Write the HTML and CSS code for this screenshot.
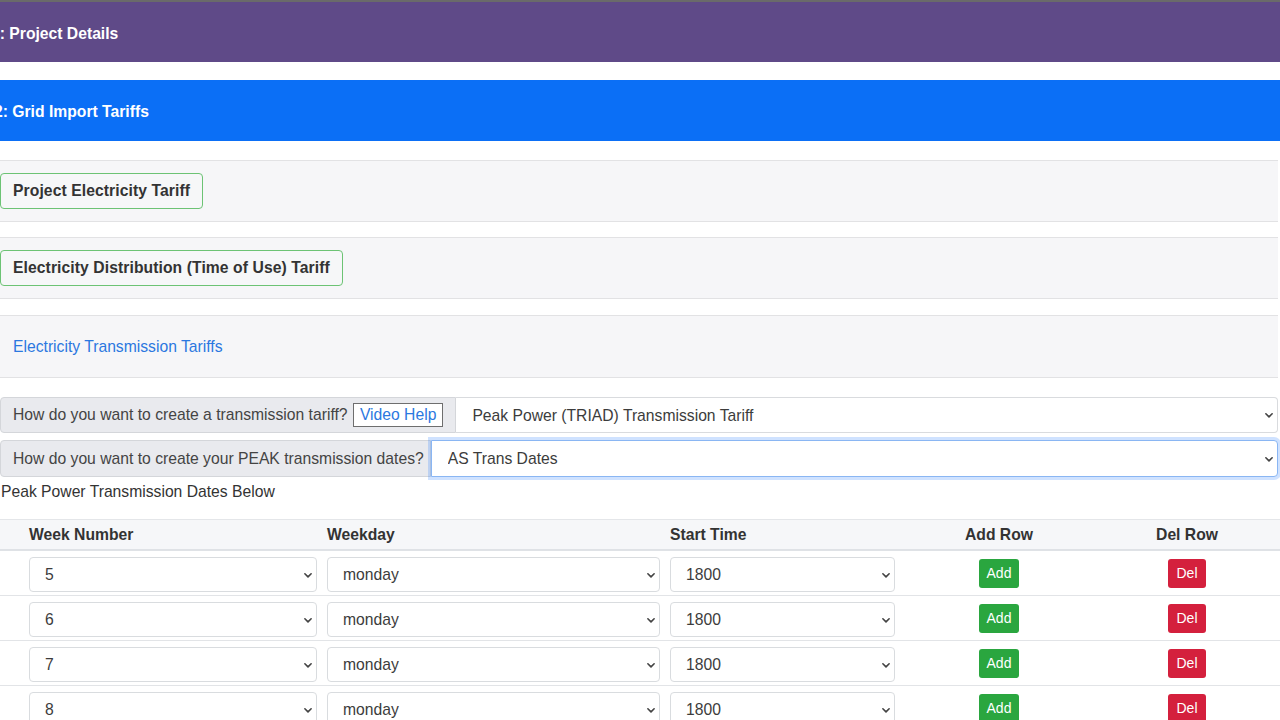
FILE: index.html
```html
<!DOCTYPE html>
<html lang="en">
<head>
<meta charset="utf-8">
<title>Grid Import Tariffs</title>
<link rel="stylesheet" href="styles.css">
</head>
<body>
<div class="page">
  <div class="topline"></div>
  <div class="bar bar-purple"><span class="bar-title t1">1: Project Details</span></div>
  <div class="bar bar-blue"><span class="bar-title t2">2: Grid Import Tariffs</span></div>

  <div class="section"><button class="tab-btn">Project Electricity Tariff</button></div>
  <div class="section section-2"><button class="tab-btn">Electricity Distribution (Time of Use) Tariff</button></div>
  <div class="section section-link"><a class="sec-link" href="#">Electricity Transmission Tariffs</a></div>

  <div class="ig ig-first">
    <span class="ig-label">How do you want to create a transmission tariff? <button class="vh-btn">Video Help</button></span>
    <select class="ig-select"><option>Peak Power (TRIAD) Transmission Tariff</option></select>
  </div>
  <div class="ig ig-second">
    <span class="ig-label ig-label-2">How do you want to create your PEAK transmission dates?</span>
    <select class="ig-select focus"><option>AS Trans Dates</option></select>
  </div>

  <p class="dates-note">Peak Power Transmission Dates Below</p>

  <div class="tbl">
    <div class="trow thead">
      <div class="th">Week Number</div>
      <div class="th">Weekday</div>
      <div class="th">Start Time</div>
      <div class="th center">Add Row</div>
      <div class="th center">Del Row</div>
    </div>
    <div class="trow tbody-row">
      <select class="cell-select"><option>5</option></select>
      <select class="cell-select"><option>monday</option></select>
      <select class="cell-select"><option>1800</option></select>
      <div class="center"><button class="btn-sm add">Add</button></div>
      <div class="center"><button class="btn-sm del">Del</button></div>
    </div>
    <div class="trow tbody-row">
      <select class="cell-select"><option>6</option></select>
      <select class="cell-select"><option>monday</option></select>
      <select class="cell-select"><option>1800</option></select>
      <div class="center"><button class="btn-sm add">Add</button></div>
      <div class="center"><button class="btn-sm del">Del</button></div>
    </div>
    <div class="trow tbody-row">
      <select class="cell-select"><option>7</option></select>
      <select class="cell-select"><option>monday</option></select>
      <select class="cell-select"><option>1800</option></select>
      <div class="center"><button class="btn-sm add">Add</button></div>
      <div class="center"><button class="btn-sm del">Del</button></div>
    </div>
    <div class="trow tbody-row">
      <select class="cell-select"><option>8</option></select>
      <select class="cell-select"><option>monday</option></select>
      <select class="cell-select"><option>1800</option></select>
      <div class="center"><button class="btn-sm add">Add</button></div>
      <div class="center"><button class="btn-sm del">Del</button></div>
    </div>
  </div>
</div>
</body>
</html>
```

FILE: styles.css
```css
* { box-sizing: border-box; }
html, body { margin: 0; padding: 0; background: #fff; }
body {
  font-family: "Liberation Sans", Arial, Helvetica, sans-serif;
  font-size: 15.7px;
  color: #3a3a3a;
  overflow: hidden;
  width: 1280px;
  height: 720px;
}
.page { width: 1280px; }
.topline { height: 2px; background: #6a6a6a; }

.bar {
  display: flex;
  align-items: center;
  color: #fff;
  font-weight: bold;
  overflow: hidden;
  white-space: nowrap;
}
.bar-purple { height: 60px; background: #5f4a88; margin-bottom: 18px; padding-top: 3px; }
.bar-blue { height: 61px; background: #0b6ff6; margin-bottom: 19px; padding-top: 2px; }
.bar-title { display: block; line-height: 20px; font-size: 15.7px; }
.t1 { margin-left: -9px; }
.t2 { margin-left: -6px; }

.section {
  background: #f6f6f8;
  border-top: 1px solid #e2e2e4;
  border-bottom: 1px solid #e2e2e4;
  padding: 12px 0;
  margin-bottom: 15px;
  margin-right: 2px;
}
.section-2 { margin-bottom: 16px; }
.tab-btn {
  font-family: inherit;
  font-size: 15.7px;
  font-weight: bold;
  color: #333;
  background: #f6f7f8;
  border: 1px solid #6cc374;
  border-radius: 4px;
  padding: 0 12px;
  height: 36px;
  line-height: 34px;
  letter-spacing: 0.08px;
  display: block;
}
.section-link { padding: 19px 0 18px 13px; margin-bottom: 19px; }
.sec-link {
  display: block;
  line-height: 24px;
  color: #2b78e0;
  text-decoration: none;
}

.ig { display: flex; margin-right: 2px; }
.ig-first { height: 36px; margin-bottom: 7px; }
.ig-second { height: 37px; }
.ig-label {
  display: flex;
  align-items: center;
  background: #e9eaee;
  border: 1px solid #d4d6da;
  border-radius: 4px 0 0 4px;
  padding: 0 12px;
  color: #444;
  white-space: pre;
}
.ig-label-2 { padding-right: 6px; }
.vh-btn {
  font-family: inherit;
  font-size: 15.7px;
  color: #2b78e0;
  background: #fff;
  border: 1px solid #6e6e6e;
  border-radius: 0;
  height: 24px;
  padding: 0 6px;
  margin-left: 1px;
  line-height: 22px;
}

select {
  -webkit-appearance: none;
  appearance: none;
  font-family: inherit;
  font-size: 15.7px;
  color: #3c3c3c;
  background-color: #fff;
  background-image: url("data:image/svg+xml,%3csvg xmlns='http://www.w3.org/2000/svg' viewBox='0 0 16 16'%3e%3cpath fill='none' stroke='%23444' stroke-linecap='round' stroke-linejoin='round' stroke-width='2.6' d='M3 6l5 5 5-5'/%3e%3c/svg%3e");
  background-repeat: no-repeat;
  background-size: 10px 10px;
  outline: none;
}
.ig-select {
  flex: 1;
  height: 100%;
  border: 1px solid #d9dbde;
  border-left: none;
  border-radius: 0 4px 4px 0;
  padding: 0 16px;
  background-position: right 3px center;
}
.ig-select.focus {
  border: 1px solid #8ab6f3;
  box-shadow: 0 0 0 3px rgba(13, 110, 253, 0.2);
  position: relative;
}

.dates-note {
  margin: 6px 0 0 1px;
  line-height: 18px;
  color: #333;
  height: 36px;
}

.tbl { width: 1280px; }
.trow {
  display: grid;
  grid-template-columns: 288px 333px 225px 188px 168px;
  column-gap: 10px;
  padding-left: 29px;
  align-items: center;
}
.thead {
  height: 32px;
  background: #f6f7f9;
  border-top: 1px solid #e4e6e9;
  border-bottom: 2px solid #dfe2e6;
}
.th { font-weight: bold; color: #333; line-height: 20px; }
.center { text-align: center; }
.tbody-row {
  height: 45px;
  border-bottom: 1px solid #e2e4e7;
  align-items: start;
  padding-top: 6px;
}
.cell-select {
  height: 35px;
  border: 1px solid #d9dcdf;
  border-radius: 4px;
  padding: 0 15px;
  background-position: right 3px center;
}
.btn-sm {
  font-family: inherit;
  font-size: 14px;
  color: #fff;
  border: none;
  border-radius: 3px;
  height: 29px;
  padding: 0 8px;
  margin-top: 2px;
  line-height: 29px;
}
.add { background: #2aa63f; }
.del { background: #d4203d; }
```
